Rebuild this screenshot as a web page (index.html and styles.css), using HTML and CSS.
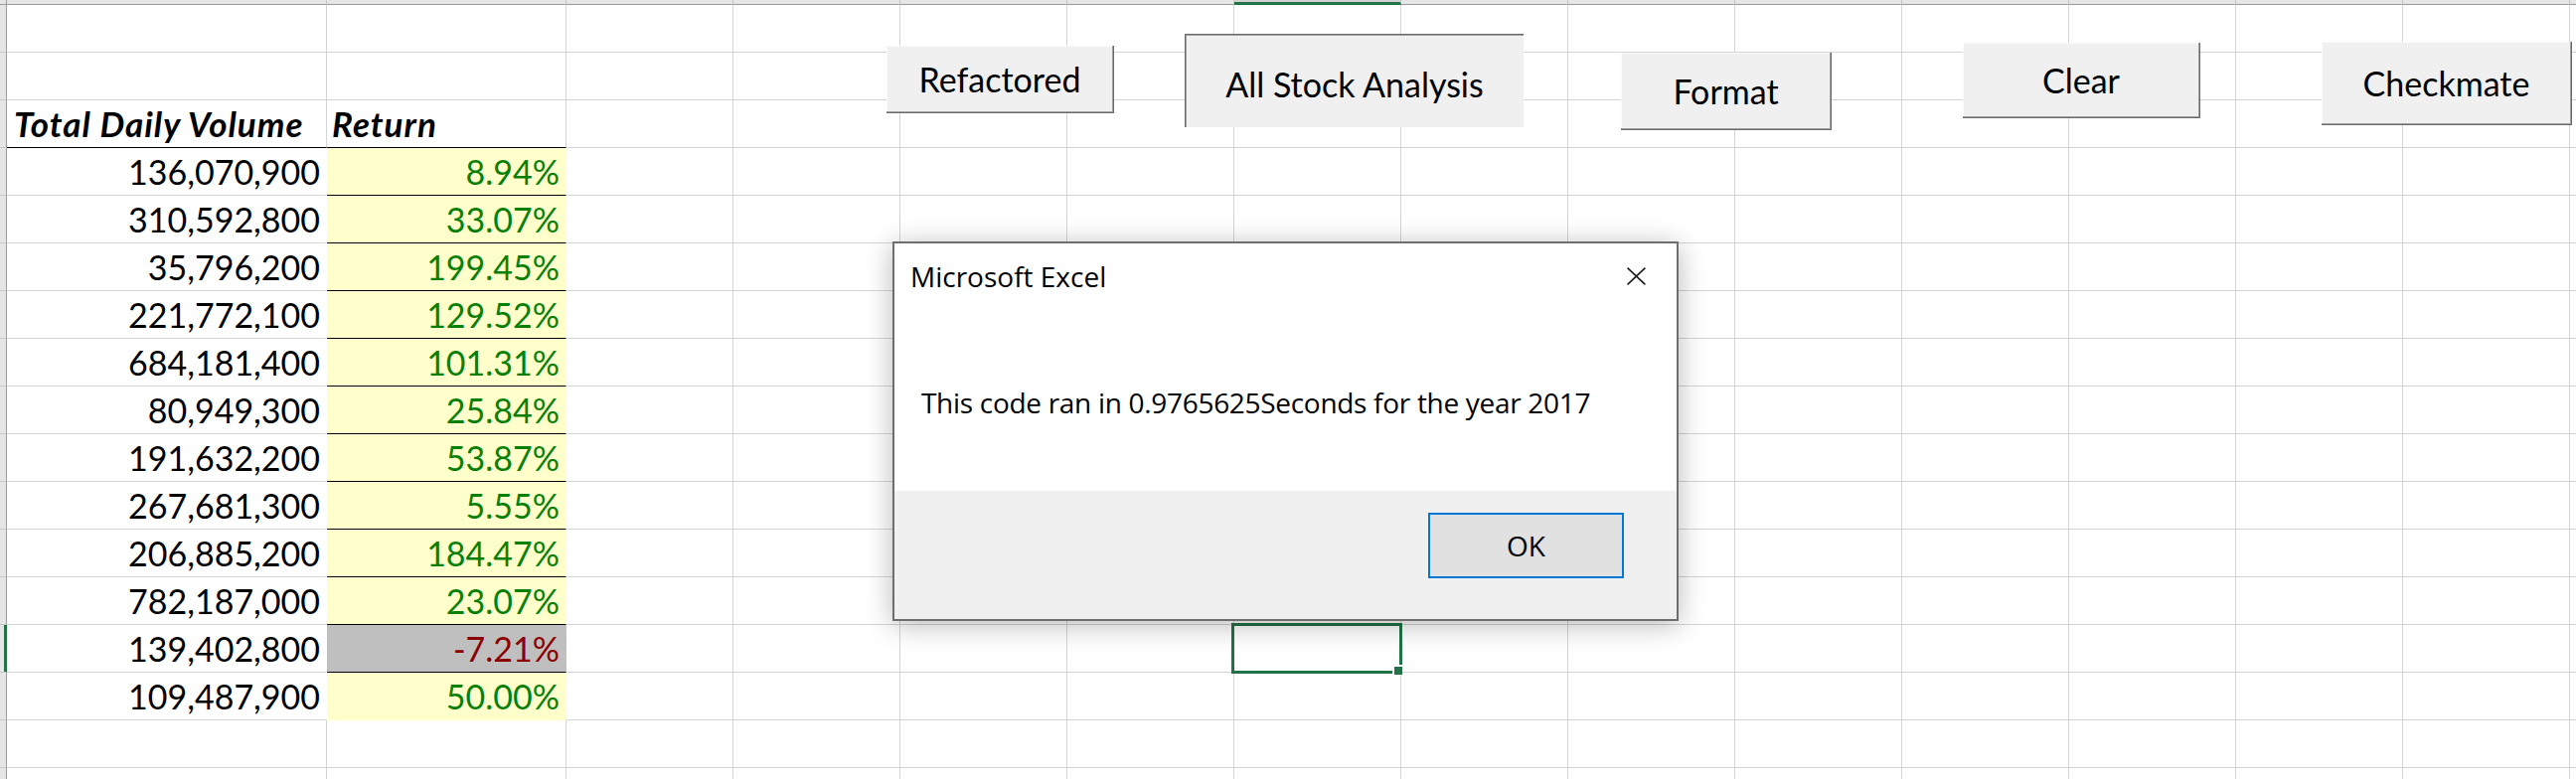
FILE: index.html
```html
<!DOCTYPE html>
<html lang="en">
<head>
<meta charset="utf-8">
<title>Stock Analysis - Excel</title>
<link rel="stylesheet" href="styles.css">
</head>
<body>
<div class="sheet">
  <div class="colhdr">
    <div class="ch-corner"></div>
    <div class="ch-a"></div>
    <div class="ch-b"></div>
    <div class="ch"></div>
    <div class="ch"></div>
    <div class="ch"></div>
    <div class="ch"></div>
    <div class="ch sel"></div>
    <div class="ch"></div>
    <div class="ch"></div>
    <div class="ch"></div>
    <div class="ch"></div>
    <div class="ch"></div>
    <div class="ch"></div>
    <div class="ch"></div>
    <div class="ch"></div>
  </div>
  <div class="main">
    <div class="rowhdr">
      <div></div><div></div><div></div><div></div><div></div><div></div>
      <div></div><div></div><div></div><div></div><div></div><div></div>
      <div></div><div class="sel"></div><div></div><div></div><div></div>
    </div>
    <div class="data">
      <div class="c"></div><div class="c"></div>
      <div class="c"></div><div class="c"></div>
      <div class="c hd hd-a">Total Daily Volume</div><div class="c hd hd-b">Return</div>
      <div class="c num vol">136,070,900</div><div class="c num ret">8.94%</div>
      <div class="c num vol">310,592,800</div><div class="c num ret">33.07%</div>
      <div class="c num vol">35,796,200</div><div class="c num ret">199.45%</div>
      <div class="c num vol">221,772,100</div><div class="c num ret">129.52%</div>
      <div class="c num vol">684,181,400</div><div class="c num ret">101.31%</div>
      <div class="c num vol">80,949,300</div><div class="c num ret">25.84%</div>
      <div class="c num vol">191,632,200</div><div class="c num ret">53.87%</div>
      <div class="c num vol">267,681,300</div><div class="c num ret">5.55%</div>
      <div class="c num vol">206,885,200</div><div class="c num ret">184.47%</div>
      <div class="c num vol">782,187,000</div><div class="c num ret">23.07%</div>
      <div class="c num vol">139,402,800</div><div class="c num ret neg">-7.21%</div>
      <div class="c num vol">109,487,900</div><div class="c num ret last">50.00%</div>
      <div class="c"></div><div class="c"></div>
      <div class="c"></div><div class="c"></div>
    </div>
    <div class="rest"></div>
  </div>

  <div class="btn b-refactored">Refactored</div>
  <div class="btn pressed b-all">All Stock Analysis</div>
  <div class="btn b-format">Format</div>
  <div class="btn b-clear">Clear</div>
  <div class="btn b-check">Checkmate</div>

  <div class="selection"><span class="handle"></span></div>

  <div class="dialog">
    <div class="dlg-title">
      <span>Microsoft Excel</span>
      <svg class="close" width="19" height="18" viewBox="0 0 19 18" aria-hidden="true">
        <path d="M0.6 0.6 L18.4 17.4 M18.4 0.6 L0.6 17.4" stroke="#1a1a1a" stroke-width="1.6" fill="none"/>
      </svg>
    </div>
    <div class="dlg-msg">This code ran in 0.9765625Seconds for the year 2017</div>
    <div class="dlg-foot">
      <div class="ok">OK</div>
    </div>
  </div>
</div>
</body>
</html>
```
FILE: styles.css
```css
html, body {
  margin: 0;
  padding: 0;
  background: #fff;
}

.sheet {
  width: 2592px;
  height: 784px;
  position: relative;
  overflow: hidden;
  background: #fff;
  display: flex;
  flex-direction: column;
  font-family: Lato, "Liberation Sans", sans-serif;
  color: #000;
}

/* column header strip */
.colhdr {
  display: flex;
  flex: none;
  height: 5px;
}
.colhdr > div {
  box-sizing: border-box;
  flex: none;
  height: 5px;
  background: #e6e6e6;
  border-right: 1px solid #c8c8c8;
  border-bottom: 1px solid #9b9b9b;
}
.colhdr .ch-corner { width: 7px; border-right-color: #9b9b9b; }
.colhdr .ch-a { width: 322px; }
.colhdr .ch-b { width: 241px; }
.colhdr .ch { width: 168px; }
.colhdr .sel {
  background: #d2d2d2;
  border-bottom: 3px solid #217346;
}

.main {
  display: flex;
  flex: 1;
  min-height: 0;
}

/* row header strip */
.rowhdr {
  flex: none;
  width: 7px;
  display: flex;
  flex-direction: column;
}
.rowhdr > div {
  box-sizing: border-box;
  flex: none;
  height: 48px;
  background: #e6e6e6;
  border-right: 1px solid #9b9b9b;
  border-bottom: 1px solid #c8c8c8;
}
.rowhdr > .sel {
  border-right-color: #217346;
  box-shadow: inset -2px 0 #217346;
}

/* data cells */
.data {
  flex: none;
  display: grid;
  grid-template-columns: 322px 241px;
  grid-auto-rows: 48px;
  align-content: start;
}
.c {
  box-sizing: border-box;
  border-right: 1px solid #d4d4d4;
  border-bottom: 1px solid #d4d4d4;
  font-size: 34px;
  line-height: 47px;
  white-space: nowrap;
  overflow: hidden;
}
.num {
  text-align: right;
  padding-right: 6px;
}
.hd {
  font-size: 35px;
  font-weight: 700;
  font-style: italic;
  letter-spacing: 1px;
  border-bottom-color: #000;
}
.hd-a { padding-left: 7px; }
.hd-b { padding-left: 5px; }
.vol { border-right-color: transparent; }
.ret {
  background: #ffffcc;
  color: #088008;
  border-right-color: transparent;
  border-bottom-color: #000;
}
.ret.neg {
  background: #bfbfbf;
  color: #8b0000;
}
.ret.last { border-bottom-color: transparent; }

.rest {
  flex: 1;
  background-image:
    repeating-linear-gradient(to right, transparent 0 167px, #d4d4d4 167px 168px),
    repeating-linear-gradient(to bottom, transparent 0 47px, #d4d4d4 47px 48px);
}

/* floating form buttons */
.btn {
  position: absolute;
  box-sizing: border-box;
  display: flex;
  align-items: center;
  justify-content: center;
  background: #f0f0f0;
  font-size: 34px;
  color: #000;
  border-right: 1px solid #696969;
  border-bottom: 1px solid #696969;
  box-shadow: inset -1px -1px #a0a0a0, inset 1px 1px #fafafa;
}
.btn.pressed {
  border-right: none;
  border-bottom: none;
  border-top: 1px solid #696969;
  border-left: 1px solid #696969;
  box-shadow: inset 1px 1px #a0a0a0;
  padding-top: 5px;
}
.b-refactored { left: 892px; top: 46px; width: 229px; height: 68px; }
.b-all { left: 1192px; top: 34px; width: 341px; height: 94px; }
.b-format { left: 1631px; top: 53px; width: 212px; height: 78px; }
.b-clear { left: 1975px; top: 43px; width: 239px; height: 76px; }
.b-check { left: 2336px; top: 42px; width: 252px; height: 84px; }

/* active cell */
.selection {
  position: absolute;
  left: 1239px;
  top: 627px;
  width: 172px;
  height: 51px;
  box-sizing: border-box;
  border: 3px solid #217346;
}
.handle {
  position: absolute;
  right: -3px;
  bottom: -4px;
  width: 8px;
  height: 8px;
  background: #217346;
  border: 2px solid #fff;
  border-right: 0;
  border-bottom: 0;
}

/* message box */
.dialog {
  position: absolute;
  left: 898px;
  top: 243px;
  width: 791px;
  height: 382px;
  box-sizing: border-box;
  border: 2px solid #6e6e6e;
  background: #fff;
  display: flex;
  flex-direction: column;
  font-family: "Open Sans", "Noto Sans", sans-serif;
  font-size: 28px;
  color: #000;
  box-shadow: 0 4px 26px rgba(0, 0, 0, 0.28);
}
.dlg-title {
  display: flex;
  align-items: center;
  justify-content: space-between;
  height: 40px;
  line-height: 40px;
  margin-top: 13px;
  padding: 0 31px 0 16px;
}
.close { display: block; }
.dlg-msg {
  flex: 1;
  line-height: 40px;
  margin-top: 87px;
  padding-left: 27px;
  letter-spacing: -0.3px;
  white-space: nowrap;
}
.dlg-foot {
  flex: none;
  height: 129px;
  background: #f0f0f0;
  display: flex;
  justify-content: flex-end;
  align-items: flex-start;
  padding: 22px 53px 0 0;
  box-sizing: border-box;
}
.ok {
  box-sizing: border-box;
  width: 197px;
  height: 66px;
  border: 2px solid #0078d7;
  background: #e1e1e1;
  display: flex;
  align-items: center;
  justify-content: center;
}
```
